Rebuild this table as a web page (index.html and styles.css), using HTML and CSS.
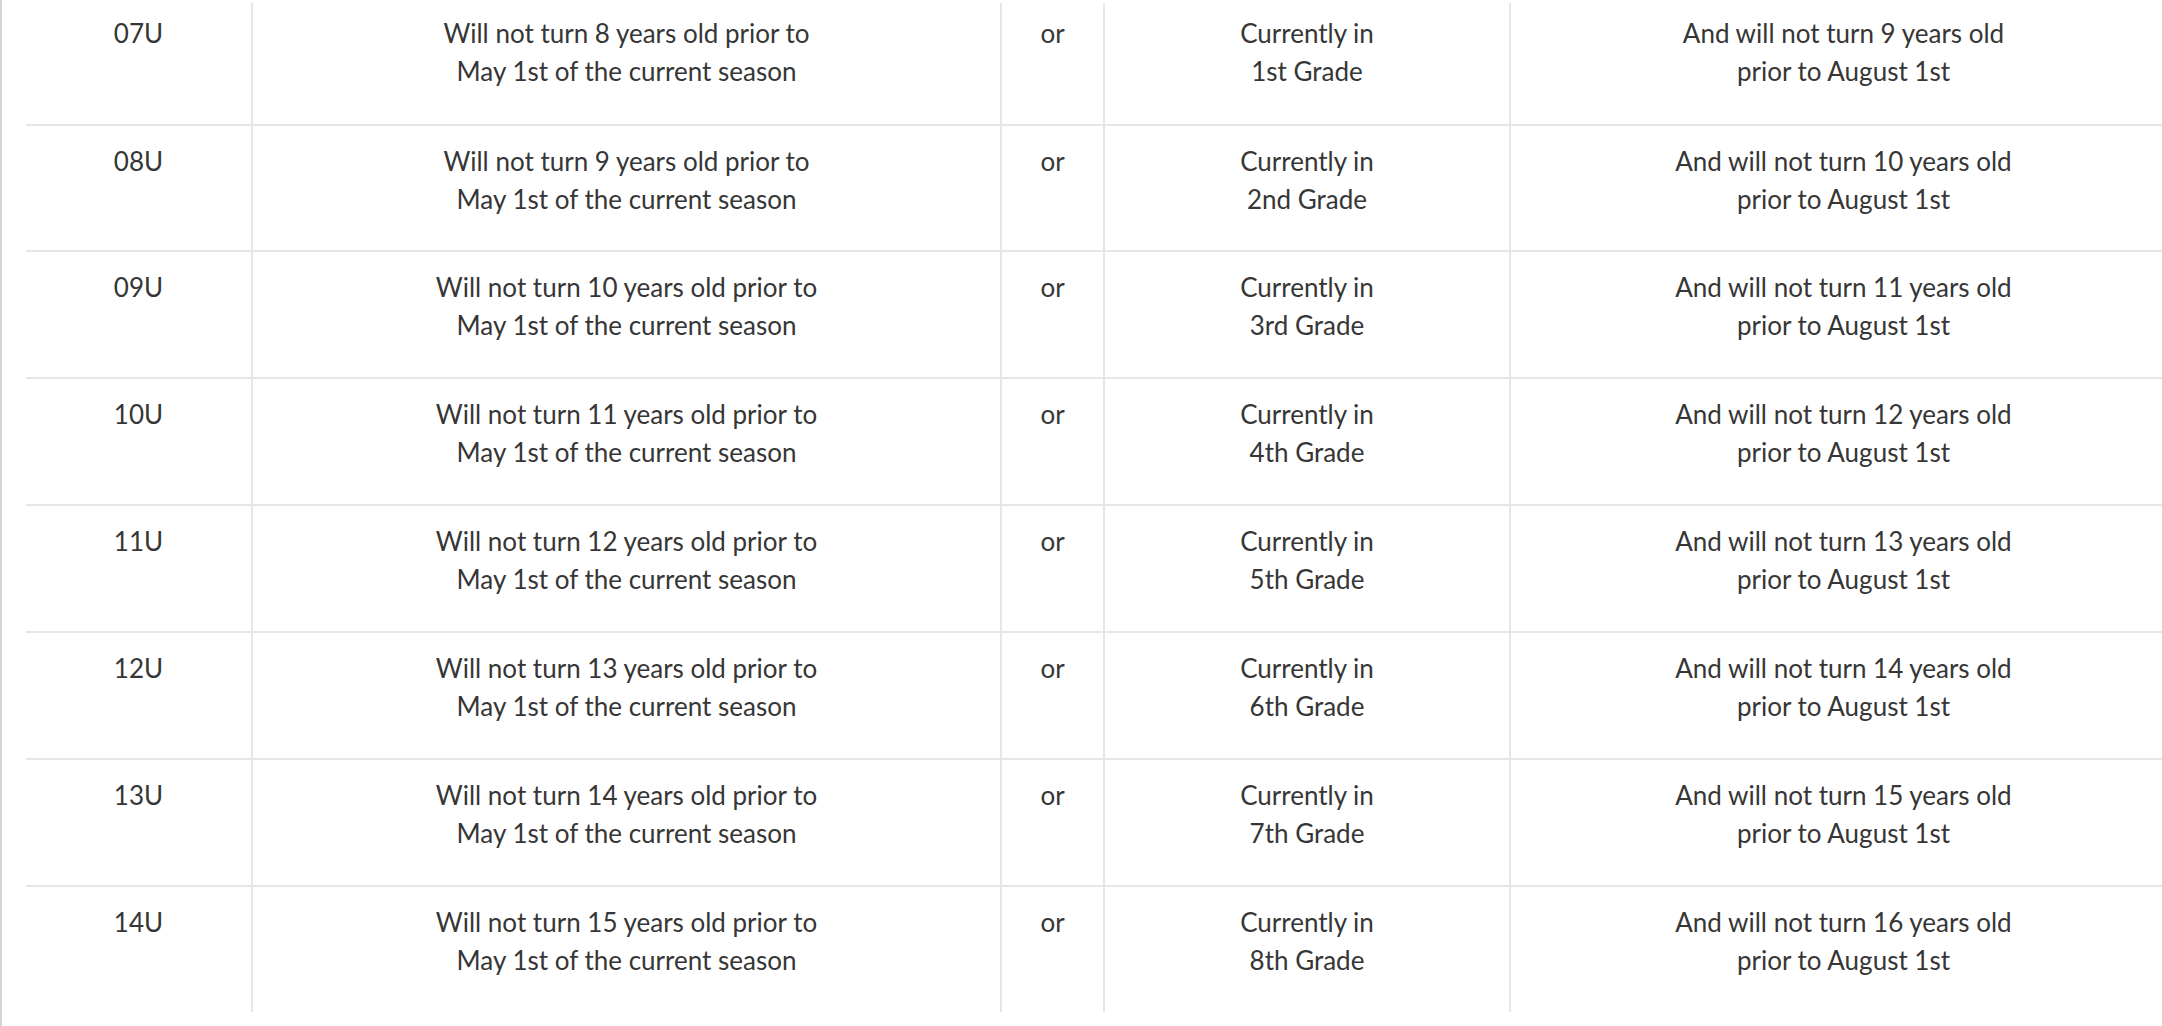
FILE: index.html
```html
<!DOCTYPE html>
<html lang="en">
<head>
<meta charset="utf-8">
<title>Age Groups</title>
<link rel="stylesheet" href="styles.css">
</head>
<body>
<div class="page">
  <table class="age-table">
    <colgroup>
      <col class="c-div">
      <col class="c-age">
      <col class="c-or">
      <col class="c-grade">
      <col class="c-aug">
    </colgroup>
    <tbody>
      <tr><td>07U</td><td>Will not turn 8 years old prior to<br>May 1st of the current season</td><td>or</td><td>Currently in<br>1st Grade</td><td>And will not turn 9 years old<br>prior to August 1st</td></tr>
      <tr><td>08U</td><td>Will not turn 9 years old prior to<br>May 1st of the current season</td><td>or</td><td>Currently in<br>2nd Grade</td><td>And will not turn 10 years old<br>prior to August 1st</td></tr>
      <tr><td>09U</td><td>Will not turn 10 years old prior to<br>May 1st of the current season</td><td>or</td><td>Currently in<br>3rd Grade</td><td>And will not turn 11 years old<br>prior to August 1st</td></tr>
      <tr><td>10U</td><td>Will not turn 11 years old prior to<br>May 1st of the current season</td><td>or</td><td>Currently in<br>4th Grade</td><td>And will not turn 12 years old<br>prior to August 1st</td></tr>
      <tr><td>11U</td><td>Will not turn 12 years old prior to<br>May 1st of the current season</td><td>or</td><td>Currently in<br>5th Grade</td><td>And will not turn 13 years old<br>prior to August 1st</td></tr>
      <tr><td>12U</td><td>Will not turn 13 years old prior to<br>May 1st of the current season</td><td>or</td><td>Currently in<br>6th Grade</td><td>And will not turn 14 years old<br>prior to August 1st</td></tr>
      <tr><td>13U</td><td>Will not turn 14 years old prior to<br>May 1st of the current season</td><td>or</td><td>Currently in<br>7th Grade</td><td>And will not turn 15 years old<br>prior to August 1st</td></tr>
      <tr><td>14U</td><td>Will not turn 15 years old prior to<br>May 1st of the current season</td><td>or</td><td>Currently in<br>8th Grade</td><td>And will not turn 16 years old<br>prior to August 1st</td></tr>
    </tbody>
  </table>
</div>
</body>
</html>
```

FILE: styles.css
```css
html, body {
  margin: 0;
  padding: 0;
  background: #ffffff;
  overflow: hidden;
}

.page {
  border-left: 2px solid #d4d4d4;
  height: 1026px;
  padding-top: 3px;
  padding-left: 24px;
  box-sizing: border-box;
}

.age-table {
  border-collapse: collapse;
  table-layout: fixed;
  width: 2150px;
  font-family: Lato, "Open Sans", sans-serif;
  font-size: 26px;
  line-height: 38px;
  color: #363636;
}

.c-div { width: 226px; }
.c-age { width: 749px; }
.c-or { width: 103px; }
.c-grade { width: 406px; }
.c-aug { width: 666px; }

.age-table td {
  text-align: center;
  vertical-align: top;
  padding: 16px 8px 32.9px;
  border-left: 2px solid #e6e6e6;
}

.age-table td:first-child {
  border-left: none;
}

.age-table tr + tr td {
  border-top: 2px solid #e6e6e6;
}

.age-table tr:first-child td {
  padding-top: 11px;
  padding-bottom: 33.5px;
}
```
